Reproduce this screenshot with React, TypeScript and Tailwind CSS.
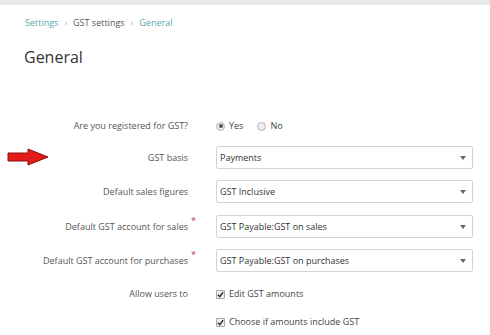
import React from "react";

const font = { fontFamily: '"Open Sans", "Noto Sans", sans-serif' };

function Select({ value }: { value: string }) {
  return (
    <div className="w-[257px] h-[23px] border border-[#d4d4d4] rounded-[2px] bg-white flex items-center justify-between pl-[3px] pr-[6px] text-[9px] text-[#333]">
      <span>{value}</span>
      <svg width="6" height="4" viewBox="0 0 6 4" className="mt-[1px]">
        <path d="M0 0 L6 0 L3 4 Z" fill="#666" />
      </svg>
    </div>
  );
}

function Radio({ checked }: { checked?: boolean }) {
  return (
    <div className="w-[9px] h-[9px] rounded-full border border-[#b5b5b5] bg-[#eeeeee] flex items-center justify-center">
      {checked && <div className="w-[4px] h-[4px] rounded-full bg-[#555]" />}
    </div>
  );
}

function Check() {
  return (
    <div className="w-[9px] h-[9px] border border-[#a8a8a8] rounded-[1px] bg-[#f0f0f0] flex items-center justify-center">
      <svg width="7" height="7" viewBox="0 0 8 8">
        <path d="M1 4.2 L3.2 6.4 L7 1.4" stroke="#333" strokeWidth="1.7" fill="none" />
      </svg>
    </div>
  );
}

function Row({
  label,
  required,
  children,
  className = "",
}: {
  label?: string;
  required?: boolean;
  children: React.ReactNode;
  className?: string;
}) {
  return (
    <div className={`flex items-center ${className}`}>
      <div className="w-[188px] relative flex justify-end text-[9px] text-[#555]">
        <span>{label}</span>
        {required && (
          <span className="absolute right-[-8px] top-[-6px] text-[9px] text-[#c0392b]">*</span>
        )}
      </div>
      <div className="ml-[28px]">{children}</div>
    </div>
  );
}

export default function App() {
  return (
    <div className="w-[490px] h-[335px] bg-white overflow-hidden relative" style={font}>
      <div className="h-[5px] bg-[#e8e8e8]" />
      <div className="pl-[25px] pt-[10px] flex items-center text-[9px] leading-[15px]">
        <span className="text-[#5aa8a8]">Settings</span>
        <span className="text-[#b0b0b0] mx-[6px] text-[9px]">›</span>
        <span className="text-[#555]">GST settings</span>
        <span className="text-[#b0b0b0] mx-[6px] text-[9px]">›</span>
        <span className="text-[#5aa8a8]">General</span>
      </div>
      <div className="pl-[24px] mt-[15px] text-[16px] leading-[24px] text-[#333]">General</div>

      <div className="mt-[49px] flex flex-col">
        <Row label="Are you registered for GST?" className="h-[16px]">
          <div className="flex items-center text-[9px] text-[#444]">
            <Radio checked />
            <span className="ml-[4px]">Yes</span>
            <div className="ml-[14px]">
              <Radio />
            </div>
            <span className="ml-[4px]">No</span>
          </div>
        </Row>
        <Row label="GST basis" className="mt-[12px]">
          <Select value="Payments" />
        </Row>
        <Row label="Default sales figures" className="mt-[11px]">
          <Select value="GST Inclusive" />
        </Row>
        <Row label="Default GST account for sales" required className="mt-[12px]">
          <Select value="GST Payable:GST on sales" />
        </Row>
        <Row label="Default GST account for purchases" required className="mt-[11px]">
          <Select value="GST Payable:GST on purchases" />
        </Row>
        <Row label="Allow users to" className="mt-[14px] h-[16px]">
          <div className="flex items-center text-[9px] text-[#444]">
            <Check />
            <span className="ml-[4px]">Edit GST amounts</span>
          </div>
        </Row>
        <Row className="mt-[12px] h-[16px]">
          <div className="flex items-center text-[9px] text-[#444]">
            <Check />
            <span className="ml-[4px]">Choose if amounts include GST</span>
          </div>
        </Row>
      </div>

      <svg className="absolute left-[7px] top-[148px]" width="42" height="18" viewBox="0 0 42 18">
        <path
          d="M1 5 L21 5 L21 1 L41 9 L21 17 L21 13 L1 13 Z"
          fill="#e31b1b"
          stroke="#8a1010"
          strokeWidth="1"
        />
      </svg>
    </div>
  );
}
